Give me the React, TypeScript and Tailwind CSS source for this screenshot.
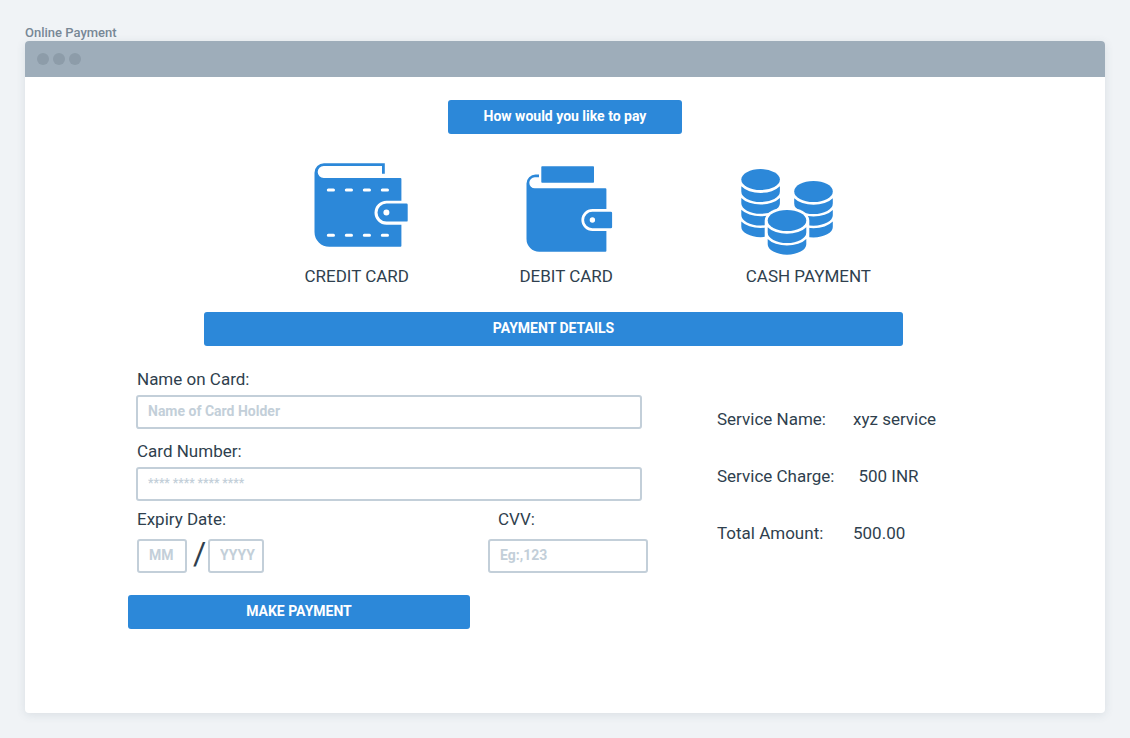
import type { ReactNode } from "react";

const COIN_STEP = 11.7;

function CreditWalletIcon() {
  return (
    <svg viewBox="0 0 95 84" className="h-[84px] w-[95px]" aria-hidden="true">
      <path
        fill="#2c88d9"
        d="M70.8 0.2H10A9.5 9.5 0 0 0 0.5 9.7V69A14.8 14.8 0 0 0 15.3 83.8H86.3A1 1 0 0 0 87.4 82.8V61.8H72.5A12 12 0 0 1 72.5 37.8H87.4V16A1 1 0 0 0 86.4 15H9.7A6 6 0 0 1 9.7 3H68V10.8H70.8Z"
      />
      <path
        fill="#2c88d9"
        fillRule="evenodd"
        d="M72.5 40.6H92.5A1.2 1.2 0 0 1 93.7 41.8V57.4A1.2 1.2 0 0 1 92.5 58.6H72.5A9 9 0 0 1 72.5 40.6ZM72.4 46.5A3 3 0 1 0 72.4 52.5A3 3 0 1 0 72.4 46.5Z"
      />
      <path
        stroke="#fff"
        strokeWidth="3"
        strokeLinecap="round"
        d="M14.3 27H19.5M32.3 27H37.5M50.3 27H55.5M68.3 27H73.5M14.3 72.2H19.5M32.3 72.2H37.5M50.3 72.2H55.5M68.3 72.2H73.5"
      />
    </svg>
  );
}

function DebitWalletIcon() {
  return (
    <svg viewBox="0 0 87 86" className="h-[86px] w-[87px]" aria-hidden="true">
      <rect x="15.3" y="0.2" width="52.7" height="16.5" rx="0.8" fill="#2c88d9" />
      <path
        fill="#2c88d9"
        d="M13 8.6H9.5A9 9 0 0 0 0.5 17.6V73A12.7 12.7 0 0 0 13.2 85.7H79.4A1 1 0 0 0 80.4 84.7V65H66.4A11 11 0 0 1 66.4 43H80.4V23.3A1 1 0 0 0 79.4 22.3H8.8A5.5 5.5 0 0 1 8.8 11.3H13Z"
      />
      <path
        fill="#2c88d9"
        fillRule="evenodd"
        d="M66.4 45.7H84.9A1.2 1.2 0 0 1 86.1 46.9V61.1A1.2 1.2 0 0 1 84.9 62.3H66.4A8.3 8.3 0 0 1 66.4 45.7ZM66.4 51.3A2.7 2.7 0 1 0 66.4 56.7A2.7 2.7 0 1 0 66.4 51.3Z"
      />
    </svg>
  );
}

function CoinStack({ cx, cy, layers }: { cx: number; cy: number; layers: number }) {
  const left = cx - 19.3;
  const right = cx + 19.3;
  return (
    <g fill="#2c88d9">
      <ellipse cx={cx} cy={cy} rx="19.3" ry="10.5" />
      {Array.from({ length: layers }, (_, i) => {
        const y = cy + i * COIN_STEP;
        return (
          <path
            key={i}
            d={`M${left} ${y + 6.7}A22.4 13.4 0 0 0 ${right} ${y + 6.7}V${y + 12}A19.3 10.5 0 0 1 ${left} ${y + 12}Z`}
          />
        );
      })}
    </g>
  );
}

function CoinsIcon() {
  return (
    <svg viewBox="0 0 92 86" className="h-[86px] w-[92px]" aria-hidden="true">
      <CoinStack cx={19.6} cy={10.6} layers={4} />
      <CoinStack cx={72.5} cy={22.5} layers={3} />
      <path fill="#fff" d="M23.7 51.5A22.3 13.3 0 0 1 68.3 51.5V86H23.7Z" />
      <CoinStack cx={46} cy={51.5} layers={2} />
    </svg>
  );
}

function Method({ label, className, children }: { label: string; className: string; children: ReactNode }) {
  return (
    <button type="button" className={`flex flex-col items-end justify-between ${className}`}>
      {children}
      <span className="text-[17px] leading-5 whitespace-nowrap">{label}</span>
    </button>
  );
}

const fieldClass =
  "block h-[34px] w-full min-w-0 rounded-[3px] border-2 border-[#c3cfd9] bg-white pl-2.5 font-bold outline-none placeholder:text-[#c3cfd9] placeholder:opacity-100";

const barClass =
  "flex h-[34px] items-center justify-center rounded-[3px] bg-[#2c88d9] pb-0.5 text-sm font-bold text-white";

const summary = [
  { term: "Service Name:", value: "xyz service" },
  { term: "Service Charge:", value: "500 INR" },
  { term: "Total Amount:", value: "500.00" },
];

export default function App() {
  return (
    <div className="flex min-h-screen flex-col bg-[#f0f3f6] p-[25px] font-['Roboto',sans-serif] text-[#2f3f4e]">
      <h1 className="text-[13px] leading-4 font-medium text-[#788896]">Online Payment</h1>
      <div className="flex grow flex-col rounded bg-white shadow-[0_2px_10px_rgba(60,80,100,0.12)]">
        <div className="flex h-9 items-center gap-1 rounded-t bg-[#9eadba] px-3">
          <span className="size-3 rounded-full bg-[#8d9ca9]" />
          <span className="size-3 rounded-full bg-[#8d9ca9]" />
          <span className="size-3 rounded-full bg-[#8d9ca9]" />
        </div>

        <main className="pt-[23px] pb-10">
          <h2 className={`mx-auto w-[234px] ${barClass}`}>How would you like to pay</h2>

          <div className="mt-7 flex h-[124px] justify-center pl-[45px]">
            <Method label="CREDIT CARD" className="w-[105px] pt-px">
              <CreditWalletIcon />
            </Method>
            <Method label="DEBIT CARD" className="ml-[109px] w-[95px] pt-1">
              <DebitWalletIcon />
            </Method>
            <Method label="CASH PAYMENT" className="ml-32 w-[130px] pt-[7px]">
              <span className="self-start">
                <CoinsIcon />
              </span>
            </Method>
          </div>

          <div className="px-[103px]">
            <h2 className={`mt-[26px] ml-[76px] max-w-[699px] ${barClass}`}>PAYMENT DETAILS</h2>

            <div className="mt-[23px] flex gap-[69px]">
              <form className="w-full max-w-[520px]" onSubmit={(e) => e.preventDefault()}>
                <div className="pr-1.5 pl-2">
                  <label htmlFor="holder" className="block pl-px text-[17px] leading-5">
                    Name on Card:
                  </label>
                  <input id="holder" placeholder="Name of Card Holder" className={`mt-1.5 pb-0.5 text-sm ${fieldClass}`} />
                  <label htmlFor="number" className="mt-3 block pl-px text-[17px] leading-5">
                    Card Number:
                  </label>
                  <input id="number" placeholder="**** **** **** ****" className={`mt-1.5 pb-0.5 text-xs ${fieldClass}`} />
                </div>

                <div className="mt-2 flex justify-between pl-[9px]">
                  <fieldset>
                    <legend className="text-[17px] leading-5">Expiry Date:</legend>
                    <div className="mt-2.5 flex h-[34px] items-start">
                      <div className="w-[50px]">
                        <input aria-label="Expiry month" placeholder="MM" className={`pb-0.5 text-sm ${fieldClass}`} />
                      </div>
                      <span className="w-[21px] pl-1 text-center text-[32px] leading-7">/</span>
                      <div className="w-14">
                        <input aria-label="Expiry year" placeholder="YYYY" className={`pb-0.5 text-sm ${fieldClass}`} />
                      </div>
                    </div>
                  </fieldset>
                  <div className="w-40">
                    <label htmlFor="cvv" className="block pl-2.5 text-[17px] leading-5">
                      CVV:
                    </label>
                    <input id="cvv" placeholder="Eg:,123" className={`mt-2.5 pb-0.5 text-sm ${fieldClass}`} />
                  </div>
                </div>

                <button type="submit" className={`mt-[22px] w-full max-w-[342px] ${barClass}`}>
                  MAKE PAYMENT
                </button>
              </form>

              <dl className="flex flex-col gap-[37px] pt-10 text-[17px] leading-5 whitespace-nowrap">
                {summary.map(({ term, value }) => (
                  <div key={term} className="flex gap-6">
                    <dt className="min-w-28">{term}</dt>
                    <dd>{value}</dd>
                  </div>
                ))}
              </dl>
            </div>
          </div>
        </main>
      </div>
    </div>
  );
}
